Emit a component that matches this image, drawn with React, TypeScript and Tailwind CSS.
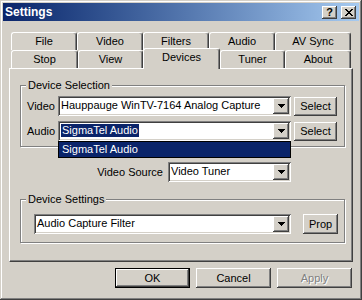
import type { ReactNode } from "react";

// Win2000 classic 3D edges
const raised =
  "shadow-[inset_-1px_-1px_0_#404040,inset_1px_1px_0_#fff,inset_-2px_-2px_0_#808080,inset_2px_2px_0_#d4d0c8]";
const sunken =
  "shadow-[inset_1px_1px_0_#808080,inset_-1px_-1px_0_#fff,inset_2px_2px_0_#404040,inset_-2px_-2px_0_#d4d0c8]";

function DownArrow() {
  return (
    <svg width="7" height="4" viewBox="0 0 7 4" aria-hidden="true">
      <path d="M0 0h7v1H0zM1 1h5v1H1zM2 2h3v1H2zM3 3h1v1H3z" fill="#000" />
    </svg>
  );
}

function CloseGlyph() {
  return (
    <svg width="8" height="7" viewBox="0 0 8 7" aria-hidden="true">
      <path
        d="M0 0h2v1H0zM6 0h2v1H6zM1 1h2v1H1zM5 1h2v1H5zM2 2h4v1H2zM3 3h2v1H3zM2 4h4v1H2zM1 5h2v1H1zM5 5h2v1H5zM0 6h2v1H0zM6 6h2v1H6z"
        fill="#000"
      />
    </svg>
  );
}

function Combo({
  value,
  className,
  highlight,
  children,
}: {
  value: string;
  className: string;
  highlight?: boolean;
  children?: ReactNode;
}) {
  return (
    <div className={`relative flex h-[20px] items-center bg-white p-[2px] ${sunken} ${className}`}>
      <div className="flex h-full flex-1 items-center overflow-hidden whitespace-nowrap pb-[1px] pl-[1px]">
        {highlight ? (
          <span className="bg-[#0a246a] px-[1px] leading-[13px] text-white">{value}</span>
        ) : (
          <span className="leading-[13px]">{value}</span>
        )}
      </div>
      <div className={`flex h-[16px] w-[16px] items-center justify-center bg-[#d4d0c8] ${raised}`}>
        <DownArrow />
      </div>
      {children}
    </div>
  );
}

function Button({ label, className, disabled }: { label: string; className: string; disabled?: boolean }) {
  return (
    <div className={`flex items-center justify-center bg-[#d4d0c8] leading-[13px] ${raised} ${className}`}>
      {disabled ? (
        <span className="text-[#808080] [text-shadow:1px_1px_0_#fff]">{label}</span>
      ) : (
        label
      )}
    </div>
  );
}

function Tab({ label, className, active }: { label: string; className: string; active?: boolean }) {
  return (
    <div
      className={`flex items-center justify-center rounded-t-[3px] border-l border-t border-r border-l-white border-t-white border-r-[#404040] bg-[#d4d0c8] leading-[13px] shadow-[inset_-1px_0_0_#808080] ${
        active ? "relative z-10 -mb-[1px] h-[21px] pb-[3px]" : "h-[18px]"
      } ${className}`}
    >
      {label}
    </div>
  );
}

function Group({ title, className, children }: { title: string; className: string; children: ReactNode }) {
  return (
    <fieldset
      className={`ml-[10px] w-[325px] border border-[#808080] shadow-[inset_1px_1px_0_#fff,1px_1px_0_#fff] ${className}`}
    >
      <legend className="ml-[5px] bg-[#d4d0c8] px-[2px] leading-[13px]">{title}</legend>
      {children}
    </fieldset>
  );
}

export default function App() {
  return (
    <div
      className={`h-[300px] w-[362px] bg-[#d4d0c8] p-[3px] font-['Liberation_Sans',Arial,sans-serif] text-[11px] text-black shadow-[inset_-1px_-1px_0_#404040,inset_1px_1px_0_#d4d0c8,inset_-2px_-2px_0_#808080,inset_2px_2px_0_#fff]`}
    >
      {/* title bar */}
      <div className="flex h-[18px] items-center bg-linear-to-r from-[#0a246a] to-[#a6caf0] pl-[2px] pr-[3px]">
        <span className="flex-1 text-[12px] font-bold leading-[14px] text-white">Settings</span>
        <div className="flex gap-[4px]">
          <div className={`flex h-[13px] w-[15px] items-center justify-center bg-[#d4d0c8] text-[11px] font-bold leading-[11px] ${raised}`}>
            ?
          </div>
          <div className={`flex h-[13px] w-[15px] items-center justify-center bg-[#d4d0c8] ${raised}`}>
            <CloseGlyph />
          </div>
        </div>
      </div>

      <div className="px-[6px] pt-[11px]">
        {/* tabs */}
        <div className="ml-[2px] flex h-[18px]">
          <Tab label="File" className="w-[66px]" />
          <Tab label="Video" className="w-[66px]" />
          <Tab label="Filters" className="w-[66px]" />
          <Tab label="Audio" className="w-[66px]" />
          <Tab label="AV Sync" className="w-[76px]" />
        </div>
        <div className="ml-[2px] flex h-[18px] items-end">
          <Tab label="Stop" className="w-[67px]" />
          <Tab label="View" className="w-[65px]" />
          <Tab label="Devices" active className="w-[77px]" />
          <Tab label="Tuner" className="w-[65px]" />
          <Tab label="About" className="w-[66px]" />
        </div>

        {/* panel */}
        <div className="h-[194px] w-[344px] border border-t-white border-l-white border-r-[#404040] border-b-[#404040] shadow-[inset_-1px_-1px_0_#808080]">
          <Group title="Device Selection" className="mt-[10px] pb-[5px]">
            <div className="flex flex-col gap-[5px] pl-[6px] pt-[4px]">
              <div className="flex items-center">
                <span className="w-[31px] leading-[13px]">Video</span>
                <Combo value="Hauppauge WinTV-7164 Analog Capture" className="w-[233px]" />
                <Button label="Select" className="ml-[3px] h-[19px] w-[43px]" />
              </div>
              <div className="relative z-20 flex items-center">
                <span className="w-[31px] leading-[13px]">Audio</span>
                <Combo value="SigmaTel Audio" highlight className="w-[233px]">
                  <div className="absolute left-0 top-full h-[17px] w-full border border-black bg-[#0a246a] pl-[3px] leading-[15px] text-white">
                    SigmaTel Audio
                  </div>
                </Combo>
                <Button label="Select" className="ml-[3px] h-[19px] w-[43px]" />
              </div>
            </div>
          </Group>

          <div className="ml-[10px] mt-[15px] flex w-[325px] items-center justify-end gap-[5px] pr-[54px]">
            <span className="leading-[13px]">Video Source</span>
            <Combo value="Video Tuner" className="w-[123px]" />
          </div>

          <Group title="Device Settings" className="mt-[11px] pb-[8px]">
            <div className="flex items-center gap-[12px] pl-[13px] pt-[8px]">
              <Combo value="Audio Capture Filter" className="w-[257px]" />
              <Button label="Prop" className="h-[20px] w-[35px]" />
            </div>
          </Group>
        </div>

        {/* dialog buttons */}
        <div className="mt-[6px] flex w-[344px] justify-end gap-[6px] pr-[1px]">
          <div className="h-[20px] w-[75px] border border-black">
            <Button label="OK" className="h-full w-full" />
          </div>
          <Button label="Cancel" className="h-[20px] w-[75px]" />
          <Button label="Apply" disabled className="h-[20px] w-[75px]" />
        </div>
      </div>
    </div>
  );
}
